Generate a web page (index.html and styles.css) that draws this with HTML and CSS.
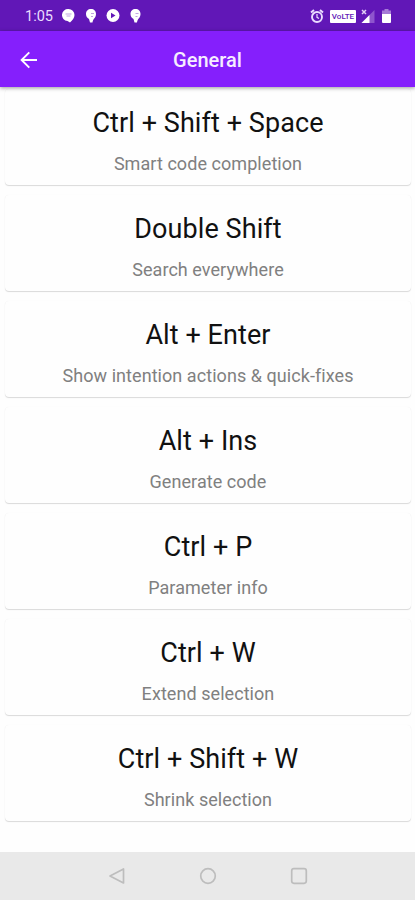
FILE: index.html
```html
<!DOCTYPE html>
<html lang="en">
<head>
<meta charset="utf-8">
<title>General</title>
<link rel="stylesheet" href="styles.css">
</head>
<body>
<div class="screen">
  <div class="status">
    <span class="time">1:05</span>
    <svg class="notes" width="82" height="16" viewBox="0 0 82 16">
      <g fill="#fff">
        <path d="M6.500 1a6 6 0 0 1 6 6c0 3-2 5-4.500 7.500L5.500 13A6 6 0 0 1 6.500 1z"/>
        <path d="M29 1c3 0 5 2 5 5 0 4-3 4.500-3.500 8.500h-2.500L27 11C25 10 24 8 24 6c0-3 2-5 5-5z"/>
        <circle cx="51" cy="7.500" r="6.500"/>
        <path d="M73.500 1c3 0 5 2 5 5 0 4-3 4.500-3.500 8.500h-2.500L71.500 11c-2-1-3-3-3-5 0-3 2-5 5-5z"/>
      </g>
      <g fill="none" stroke="#6117b7" stroke-width="1" opacity=".4">
        <path d="M3.500 6h6M4.500 8h4M29 5.500h3M29 8.500h2M73.500 5.500h3M73.500 8.500h2"/>
      </g>
      <path d="M49 4.800v5.400l4.500-2.700z" fill="#6117b7"/>
    </svg>
    <span class="grow"></span>
    <svg class="alarm" width="14" height="15" viewBox="0 0 14 15" fill="none" stroke="#eadcff">
      <circle cx="7" cy="8" r="5" stroke-width="1.900"/>
      <path d="M1 3.500 4 1M10 1l3 2.500" stroke-width="2"/>
      <path d="M7 5v3.300l2 1.200" stroke-width="1.200"/>
    </svg>
    <span class="lte">VoLTE</span>
    <svg class="signal" width="14" height="15" viewBox="0 0 14 15">
      <path d="M13.500 1v13H.5z" fill="#8e55cd"/>
      <path d="M8.500 6v8h-8z" fill="#fff"/>
      <path d="M1 1l4 4M5 1 1 5" stroke="#e2d0f5" stroke-width="1.500"/>
    </svg>
    <svg class="battery" width="9" height="14" viewBox="0 0 9 14">
      <path d="M2.500 0h4v1.500H9V5H0V1.500h2.500z" fill="#a67bd7"/>
      <path d="M0 5h9v8a1 1 0 0 1-1 1H1a1 1 0 0 1-1-1z" fill="#fff"/>
    </svg>
  </div>
  <header class="bar">
    <svg class="back" width="18" height="18" viewBox="0 0 18 18" fill="none" stroke="#fff" stroke-width="1.900"><path d="M17 9H2M9.300 1.300 1.600 9l7.700 7.700"/></svg>
    <h1>General</h1>
  </header>
  <main class="list">
    <section class="card"><h2>Ctrl + Shift + Space</h2><p>Smart code completion</p></section>
    <section class="card"><h2>Double Shift</h2><p>Search everywhere</p></section>
    <section class="card"><h2>Alt + Enter</h2><p>Show intention actions &amp; quick-fixes</p></section>
    <section class="card"><h2>Alt + Ins</h2><p>Generate code</p></section>
    <section class="card"><h2>Ctrl + P</h2><p>Parameter info</p></section>
    <section class="card"><h2>Ctrl + W</h2><p>Extend selection</p></section>
    <section class="card"><h2>Ctrl + Shift + W</h2><p>Shrink selection</p></section>
  </main>
  <nav class="nav">
    <svg width="18" height="18" viewBox="0 0 18 18"><path d="M15.500 2v14L2 9z"/></svg>
    <svg width="18" height="18" viewBox="0 0 18 18"><circle cx="9" cy="9" r="7.300"/></svg>
    <svg width="18" height="18" viewBox="0 0 18 18"><rect x="1.700" y="1.700" width="14.600" height="14.600" rx="2.200"/></svg>
  </nav>
</div>
</body>
</html>
```
FILE: styles.css
```css
* { box-sizing: border-box; }
body { margin: 0; font-family: Roboto, "Liberation Sans", sans-serif; background: #fefefe; }
.screen { width: 415px; height: 900px; display: flex; flex-direction: column; overflow: hidden; }
.status { height: 31px; flex: none; display: flex; align-items: center; background: #6117b7; padding: 1px 24px 0 25px; color: #eadcff; }
.time { width: 37px; font-size: 14.500px; letter-spacing: 0; }
.grow { flex: 1; }
.lte { width: 26px; height: 13px; margin-left: 6px; border-radius: 1px; background: #fff; color: #6117b7; font-size: 8px; font-weight: 500; line-height: 13px; text-align: center; }
.signal { margin-left: 5px; }
.battery { margin-left: 7px; }
.bar { height: 56px; flex: none; display: flex; align-items: center; padding: 2px 20px 0; background: #851ffc; box-shadow: 0 1px 4px rgba(0,0,0,.4); position: relative; }
.back { flex: none; }
.bar h1 { flex: 1; margin: 0; padding-right: 18px; text-align: center; color: #f6edff; font-size: 20px; font-weight: 500; }
.list { flex: 1; padding: 2px 4px 0 5px; display: flex; flex-direction: column; gap: 10px; }
.card { height: 96px; flex: none; padding-top: 16px; text-align: center; border-radius: 4px; background: #fefefe; box-shadow: 0 1px 1px rgba(0,0,0,.14), 0 0 1px rgba(0,0,0,.06); }
.card h2 { margin: 0; font-size: 27px; line-height: 36px; font-weight: 400; letter-spacing: .08px; color: #111; }
.card p { margin: 12px 0 0; font-size: 18px; line-height: 22px; letter-spacing: .06px; color: #808080; }
.nav { height: 48px; flex: none; display: flex; justify-content: center; align-items: center; gap: 73px; padding-left: 1px; background: #e9e9e9; }
.nav svg { fill: none; stroke: #bdbdbd; stroke-width: 1.7; stroke-linejoin: round; }
```
